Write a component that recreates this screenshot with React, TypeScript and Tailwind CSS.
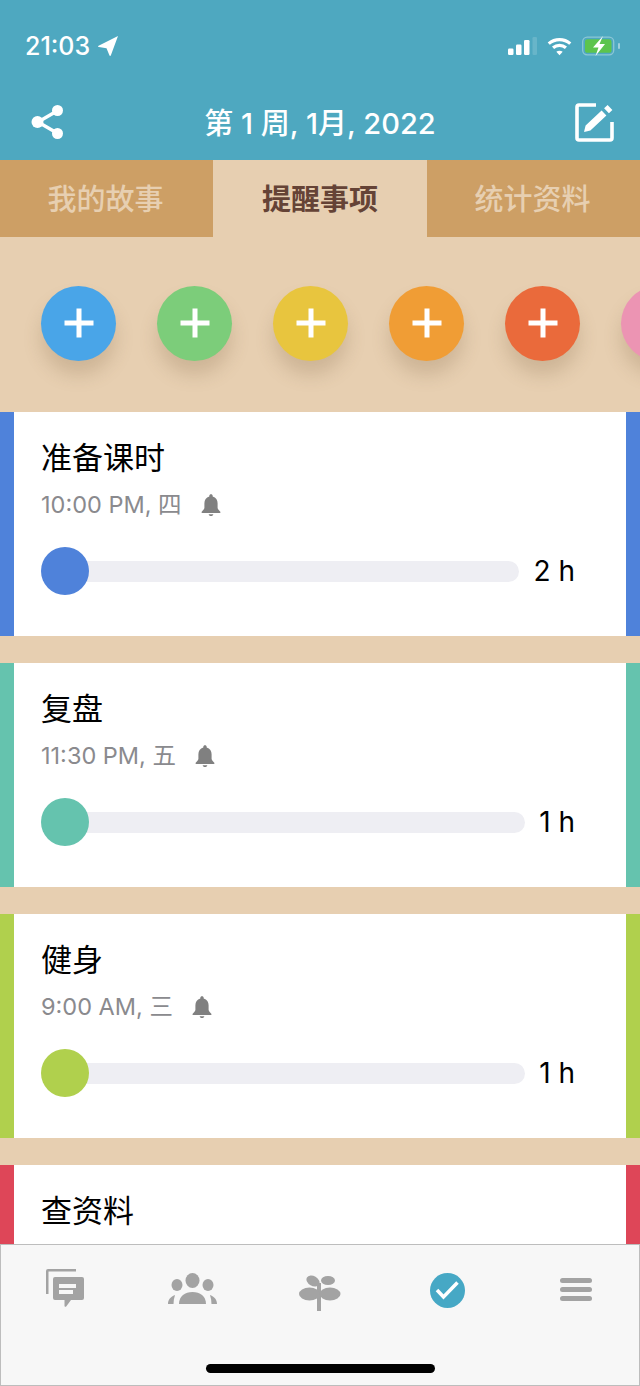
import React from "react";

const FONT = "[font-family:Inter,'Noto_Sans_CJK_SC',sans-serif]";

function Card({ title, time, hours, color }: { title: string; time?: string; hours?: string; color: string }) {
  return (
    <div className="flex h-[224px] shrink-0 bg-white">
      <div className={`w-[14px] shrink-0 ${color}`} />
      <div className="flex min-w-0 flex-1 flex-col pl-[27px] pr-[51px] pt-[25px]">
        <div className="h-[42px] text-[31px] leading-[42px] text-black">{title}</div>
        {time && (
          <div className="mt-[10px] flex h-[32px] items-center gap-[18px] text-[23.5px] leading-[32px] text-[#8a8a8e]">
            <span>{time}</span>
            <svg width="22" height="24" viewBox="0 0 22 24" fill="#808080">
              <path d="M11 1.200c-1 0-1.700.7-1.700 1.700v.6C6 4.400 4.400 7 4.400 10.200v4.600c0 1.400-1.500 2.500-2.700 3.900-.4.500-.2 1.300.6 1.300h17.400c.8 0 1-.8.6-1.300-1.200-1.400-2.700-2.500-2.700-3.900v-4.600c0-3.200-1.600-5.800-4.900-6.700v-.6c0-1-.7-1.700-1.700-1.700zM8.700 21.200c.1 1.100 1 1.800 2.300 1.800s2.200-.7 2.300-1.800z" />
            </svg>
          </div>
        )}
        {hours && (
          <div className="mt-[26px] flex h-[48px] items-center gap-[14px]">
            <div className="relative h-[21px] flex-1 rounded-full bg-[#eeeef3]">
              <div className={`absolute left-0 top-[-14px] h-[48px] w-[48px] rounded-full ${color}`} />
            </div>
            <span className="text-[28px] leading-[36px] text-black">{hours}</span>
          </div>
        )}
      </div>
      <div className={`w-[14px] shrink-0 ${color}`} />
    </div>
  );
}

function Plus({ color }: { color: string }) {
  return (
    <div className={`flex h-[75px] w-[75px] shrink-0 items-center justify-center rounded-full shadow-[0_14px_18px_rgba(120,90,60,0.22)] ${color}`}>
      <svg width="30" height="30" viewBox="0 0 30 30" fill="#fff" className="mb-[2px]">
        <rect x="12.500" y="0.500" width="5" height="29" />
        <rect x="0.500" y="12.500" width="29" height="5" />
      </svg>
    </div>
  );
}

export default function App() {
  return (
    <div className={`flex h-[1386px] w-[640px] flex-col overflow-hidden bg-[#e7cfb1] ${FONT}`}>
      <header className="h-[160px] shrink-0 bg-[#4ea8c0] text-white">
        <div className="flex h-[92px] items-center justify-between pl-[25px] pr-[20px]">
          <div className="flex items-center gap-[8px]">
            <span className="text-[25px] font-medium leading-[30px]">21:03</span>
            <svg width="20" height="20" viewBox="0 0 20 20" fill="#fff">
              <path d="M20 0 .6 9.800c-.8.400-.5 1.300.3 1.300l7.600 1.100 2.900 7.100c.2.800 1.100.9 1.400.2z" />
            </svg>
          </div>
          <div className="flex items-center gap-[10px]">
            <svg width="29" height="18" viewBox="0 0 29 18">
              <rect x="0" y="11.500" width="5.500" height="6.500" rx="1.200" fill="#fff" />
              <rect x="8" y="7.500" width="5.500" height="10.500" rx="1.200" fill="#fff" />
              <rect x="16" y="3" width="5.500" height="15" rx="1.200" fill="#fff" />
              <rect x="24.500" y="0" width="4.500" height="18" rx="1.200" fill="#fff" fillOpacity="0.15" />
            </svg>
            <svg width="25" height="19" viewBox="0 0 26 19" fill="none" stroke="#fff" strokeWidth="3.400">
              <path d="M1.800 6.500c6.500-5.600 15.900-5.600 22.400 0" />
              <path d="M6.300 10.800c3.900-3.300 9.500-3.300 13.400 0" />
              <path d="M13 18.500 9.700 15c1.900-1.600 4.700-1.600 6.600 0z" fill="#fff" stroke="none" />
            </svg>
            <svg width="38" height="20" viewBox="0 0 38 20">
              <rect x="0.700" y="1.200" width="31" height="17.600" rx="4.500" fill="none" stroke="#fff" strokeOpacity="0.35" strokeWidth="1.300" />
              <rect x="3" y="3.200" width="26.500" height="13.600" rx="2.600" fill="#5cc44d" />
              <rect x="36" y="7" width="2" height="6" rx="1" fill="#fff" fillOpacity="0.45" />
              <path d="M21 0 11 11.500h5.500L13.500 20 23 8h-5.500z" fill="#fff" />
            </svg>
          </div>
        </div>
        <div className="flex h-[68px] items-start justify-between pl-[31px] pr-[26px]">
          <svg width="34" height="36" viewBox="0 0 34 36" className="mt-[12px]" fill="#fff" stroke="#fff">
            <path d="M26 7 7 18l19 11" fill="none" strokeWidth="3.400" />
            <circle cx="26.500" cy="6.500" r="5.500" stroke="none" />
            <circle cx="6.500" cy="18" r="6" stroke="none" />
            <circle cx="26.500" cy="29.500" r="5.500" stroke="none" />
          </svg>
          <div className="mt-[11px] text-[29px] font-medium leading-[42px]">第 1 周, 1月, 2022</div>
          <svg width="39" height="39" viewBox="0 0 39 39" className="mt-[11px]" fill="none">
            <path d="M21 2H4a2 2 0 0 0-2 2v31a2 2 0 0 0 2 2h31a2 2 0 0 0 2-2V19" stroke="#fff" strokeWidth="3.600" />
            <path d="M9 29l1.600-6.500L26.600 7.500l4.800 5L15.400 27.500zM29.100 5.200l4.800 5 3.500-3.200-4.800-5z" fill="#fff" />
          </svg>
        </div>
      </header>

      <nav className="grid h-[77px] shrink-0 grid-cols-[213px_214px_213px] text-center text-[29px] leading-[75px]">
        <div className="bg-[#cd9f65] pr-[2px] pt-[2px] font-medium text-[#e7cfb1]">我的故事</div>
        <div className="bg-[#e7cfb1] pt-[2px] font-bold text-[#654336]">提醒事项</div>
        <div className="bg-[#cd9f65] pr-[2px] pt-[2px] font-medium text-[#e7cfb1]">统计资料</div>
      </nav>

      <div className="flex h-[175px] shrink-0 gap-[41px] overflow-hidden pl-[41px] pt-[49px]">
        <Plus color="bg-[#49a5e8]" />
        <Plus color="bg-[#7ccd7a]" />
        <Plus color="bg-[#e8c53e]" />
        <Plus color="bg-[#f09d35]" />
        <Plus color="bg-[#ea6a3b]" />
        <Plus color="bg-[#ec94b3]" />
      </div>

      <main className="flex min-h-0 flex-1 flex-col gap-[27px] overflow-hidden">
        <Card title="准备课时" time="10:00 PM, 四" hours="2 h" color="bg-[#4f82da]" />
        <Card title="复盘" time="11:30 PM, 五" hours="1 h" color="bg-[#65c3ae]" />
        <Card title="健身" time="9:00 AM, 三" hours="1 h" color="bg-[#b0d04d]" />
        <Card title="查资料" color="bg-[#de4658]" />
      </main>

      <footer className="flex h-[142px] shrink-0 flex-col border border-[#bdbdbd] bg-[#f7f7f7]">
        <div className="grid grid-cols-5 pt-[24px]">
          <div className="flex justify-center">
            <svg width="38" height="38" viewBox="0 0 38 38" fill="#a3a3a3">
              <path d="M0 25V2a2 2 0 0 1 2-2h28v2.500H2.500V25z" />
              <path fillRule="evenodd" d="M9 8h27a2 2 0 0 1 2 2v19a2 2 0 0 1-2 2H25l-4.800 6.400c-.6.800-1.700.4-1.700-.6V31H9a2 2 0 0 1-2-2V10a2 2 0 0 1 2-2zM13 15v4h17v-4zM13 21v4h14v-4z" />
            </svg>
          </div>
          <div className="flex justify-center pl-[1px] pt-[4px]">
            <svg width="49" height="31" viewBox="0 0 49 31" fill="#a3a3a3">
              <ellipse cx="24.500" cy="7.500" rx="7" ry="7.500" />
              <ellipse cx="9" cy="12" rx="5.500" ry="6" />
              <ellipse cx="40" cy="12" rx="5.500" ry="6" />
              <path d="M11 31c0-8 6-12 13.500-12S38 23 38 31z" />
              <path d="M0 31c0-4 2-7 7-9-1 3-1.500 6-1.500 9zM49 31c0-4-2-7-7-9 1 3 1.500 6 1.500 9z" />
            </svg>
          </div>
          <div className="flex justify-center pt-[6px]">
            <svg width="42" height="36" viewBox="0 0 42 36" fill="#a3a3a3">
              <path d="M18 8h4v28h-4z" />
              <ellipse cx="14" cy="6" rx="7" ry="5" transform="rotate(30 14 6)" />
              <ellipse cx="29" cy="5.500" rx="7" ry="4.500" />
              <ellipse cx="10.500" cy="19" rx="10.500" ry="6.500" />
              <ellipse cx="31" cy="19" rx="10.500" ry="6.500" />
            </svg>
          </div>
          <div className="flex justify-center pt-[4px]">
            <svg width="35" height="35" viewBox="0 0 35 35">
              <circle cx="17.500" cy="17.500" r="17.500" fill="#46a8c5" />
              <path d="M7 17l6.500 7L27.500 9.500" fill="none" stroke="#fff" strokeWidth="3.500" />
            </svg>
          </div>
          <div className="flex justify-center pl-[2px] pt-[9px]">
            <div className="flex w-[32px] flex-col gap-[4px]">
              <div className="h-[5px] rounded-full bg-[#a3a3a3]" />
              <div className="h-[5px] rounded-full bg-[#a3a3a3]" />
              <div className="h-[5px] rounded-full bg-[#a3a3a3]" />
            </div>
          </div>
        </div>
        <div className="mb-[12px] mt-auto flex justify-center">
          <div className="h-[9px] w-[229px] rounded-full bg-black" />
        </div>
      </footer>
    </div>
  );
}
